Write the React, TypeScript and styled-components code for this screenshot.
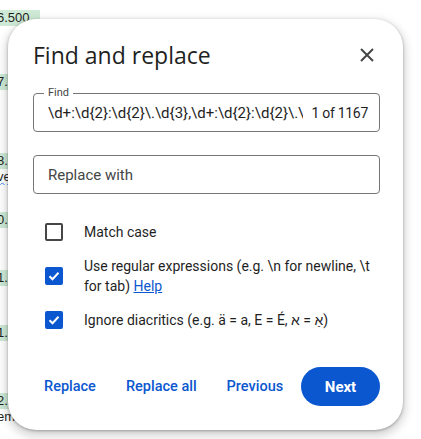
import styled, { createGlobalStyle } from "styled-components";

const GlobalStyle = createGlobalStyle`
  html, body {
    margin: 0;
    padding: 0;
    background: #ffffff;
  }
  body {
    font-family: Roboto, "Liberation Sans", Arial, sans-serif;
    color: #1f1f1f;
  }
`;

type Cell = { text: string; top: number; green?: boolean; squiggle?: boolean };

// spreadsheet cells that peek out from behind the dialog
const cells: Cell[] = [
  { text: "6.500", top: 10, green: true },
  { text: "7.5", top: 48, green: true },
  { text: "8.5", top: 63, green: true },
  { text: "ver", top: 0, squiggle: true },
  { text: "0.5", top: 27, green: true },
  { text: "1.5", top: 42, green: true },
  { text: "1.5", top: 39, green: true },
  { text: "2.5", top: 52, green: true },
  { text: "em", top: 0 },
];

export default function App() {
  return (
    <>
      <GlobalStyle />
      <Page>
        <SheetColumn>
          {cells.map((c, i) => (
            <SheetCell key={i} $green={c.green} style={{ marginTop: c.top }}>
              <CellText $squiggle={c.squiggle}>{c.text}</CellText>
            </SheetCell>
          ))}
        </SheetColumn>

        <Dialog role="dialog" aria-label="Find and replace">
          <Header>
            <Title>Find and replace</Title>
            <CloseButton aria-label="Close">
              <svg width="14" height="14" viewBox="0 0 14 14">
                <path d="M1 1L13 13M13 1L1 13" stroke="#444746" strokeWidth="2" />
              </svg>
            </CloseButton>
          </Header>

          <Field $top={22}>
            <Legend>Find</Legend>
            <FieldText>\d+:\d{"{2}"}:\d{"{2}"}\.\d{"{3}"},\d+:\d{"{2}"}:\d{"{2}"}\.\d{"{3}"}</FieldText>
            <Count>1 of 1167</Count>
          </Field>

          <Field $top={23}>
            <Placeholder>Replace with</Placeholder>
          </Field>

          <Options>
            <Option>
              <Box />
              <OptionLabel>Match case</OptionLabel>
            </Option>
            <Option>
              <Box $checked>
                <Tick />
              </Box>
              <OptionLabel>
                Use regular expressions (e.g. \n for newline, \t for tab) <HelpLink>Help</HelpLink>
              </OptionLabel>
            </Option>
            <Option>
              <Box $checked>
                <Tick />
              </Box>
              <OptionLabel>{"Ignore diacritics (e.g. ä = a, E = É, \u05D0\u200E = \u05D0\u05B7\u200E)"}</OptionLabel>
            </Option>
          </Options>

          <Actions>
            <TextButtons>
              <TextButton>Replace</TextButton>
              <TextButton>Replace all</TextButton>
              <TextButton>Previous</TextButton>
            </TextButtons>
            <PrimaryButton>Next</PrimaryButton>
          </Actions>
        </Dialog>
      </Page>
    </>
  );
}

const Tick = () => (
  <svg width="12" height="10" viewBox="0 0 12 10">
    <path d="M1.5 5.2L4.5 8.2L10.5 1.8" fill="none" stroke="#fff" strokeWidth="2" />
  </svg>
);

const Page = styled.div`
  position: relative;
  width: 421px;
  height: 439px;
  overflow: hidden;
  background: #fff;
`;

const SheetColumn = styled.div`
  display: flex;
  flex-direction: column;
  width: 40px;
`;

const SheetCell = styled.div<{ $green?: boolean }>`
  height: 16px;
  width: 40px;
  overflow: hidden;
  white-space: nowrap;
  background: ${({ $green }) => ($green ? "#ceead6" : "transparent")};
  font-family: "Liberation Sans", Arial, sans-serif;
  font-size: 13px;
  line-height: 16px;
  color: #1f1f1f;
`;

const CellText = styled.span<{ $squiggle?: boolean }>`
  display: inline-block;
  margin-left: -3px;
  text-decoration: ${({ $squiggle }) => ($squiggle ? "underline wavy #4a86e8" : "none")};
  text-decoration-thickness: 1px;
`;

const Dialog = styled.div`
  position: absolute;
  left: 8px;
  top: 19px;
  width: 395px;
  height: 411px;
  box-sizing: border-box;
  padding: 20px 23px 0 25px;
  background: #fff;
  border-radius: 28px;
  box-shadow: 0 1px 3px rgba(0, 0, 0, 0.3), 0 4px 8px 3px rgba(0, 0, 0, 0.15);
  display: flex;
  flex-direction: column;
`;

const Header = styled.div`
  display: flex;
  align-items: center;
  justify-content: space-between;
  height: 32px;
`;

const Title = styled.h2`
  margin: 0;
  font-family: "Open Sans", Roboto, sans-serif;
  font-weight: 400;
  font-size: 23px;
  line-height: 32px;
  color: #1f1f1f;
`;

const CloseButton = styled.button`
  border: 0;
  background: none;
  padding: 0;
  margin-right: 6px;
  width: 14px;
  height: 14px;
  display: flex;
  cursor: pointer;
`;

const Field = styled.div<{ $top: number }>`
  position: relative;
  margin-top: ${({ $top }) => $top}px;
  height: 39px;
  box-sizing: border-box;
  border: 1px solid #747775;
  border-radius: 4px;
  display: flex;
  align-items: center;
  padding: 0 11px 0 14px;
  gap: 9px;
  font-size: 15px;
`;

const Legend = styled.span`
  position: absolute;
  left: 10px;
  top: -7px;
  padding: 0 4px;
  background: #fff;
  font-size: 11px;
  line-height: 12px;
  color: #444746;
`;

const FieldText = styled.span`
  flex: 1 1 0;
  min-width: 0;
  overflow: hidden;
  white-space: nowrap;
  color: #1f1f1f;
`;

const Count = styled.span`
  flex: none;
  white-space: nowrap;
  color: #1f1f1f;
  font-size: 14px;
  letter-spacing: -0.3px;
`;

const Placeholder = styled.span`
  color: #444746;
`;

const Options = styled.div`
  display: flex;
  flex-direction: column;
  gap: 14px;
  margin-top: 28px;
  padding-left: 12px;
`;

const Option = styled.div`
  display: flex;
  align-items: center;
  gap: 21px;
`;

const Box = styled.span<{ $checked?: boolean }>`
  flex: none;
  width: 18px;
  height: 18px;
  box-sizing: border-box;
  border-radius: 2px;
  border: 2px solid ${({ $checked }) => ($checked ? "#0b57d0" : "#444746")};
  background: ${({ $checked }) => ($checked ? "#0b57d0" : "#fff")};
  display: flex;
  align-items: center;
  justify-content: center;
`;

const OptionLabel = styled.span`
  font-size: 14px;
  line-height: 20px;
  color: #1f1f1f;
  max-width: 300px;
`;

const HelpLink = styled.a`
  color: #0b57d0;
  text-decoration: underline;
`;

const Actions = styled.div`
  margin-top: auto;
  margin-bottom: 24px;
  display: flex;
  align-items: center;
  justify-content: space-between;
  padding-left: 11px;
`;

const TextButtons = styled.div`
  display: flex;
  align-items: center;
  gap: 30px;
`;

const TextButton = styled.button`
  flex: none;
  white-space: nowrap;
  border: 0;
  background: none;
  padding: 0;
  font-family: Roboto, "Liberation Sans", sans-serif;
  font-weight: 500;
  font-size: 14.5px;
  color: #0b57d0;
  cursor: pointer;
`;

const PrimaryButton = styled.button`
  flex: none;
  border: 0;
  width: 79px;
  height: 39px;
  border-radius: 20px;
  background: #0b57d0;
  color: #fff;
  font-family: Roboto, "Liberation Sans", sans-serif;
  font-weight: 700;
  font-size: 15px;
  cursor: pointer;
`;
